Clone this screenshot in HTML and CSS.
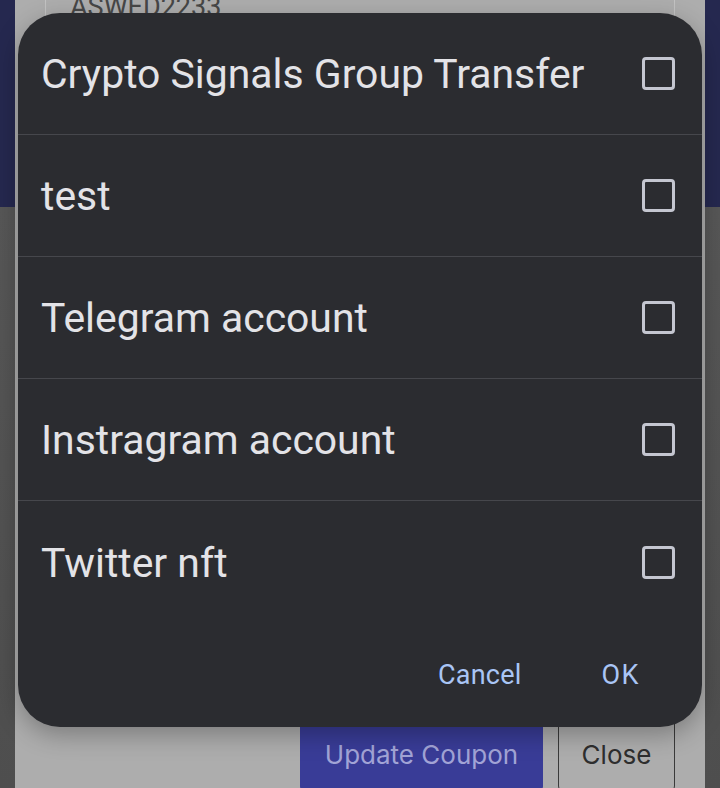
FILE: index.html
```html
<!DOCTYPE html>
<html>
<head>
<meta charset="utf-8">
<link rel="stylesheet" href="styles.css">
</head>
<body>
<div class="page">
  <div class="page-header"></div>
  <div class="page-rest"></div>
</div>

<div class="card">
  <div class="field"><span class="field-value">ASWED2233</span></div>
  <div class="card-spacer"></div>
  <div class="card-actions">
    <button class="btn btn-primary">Update Coupon</button>
    <button class="btn btn-outline">Close</button>
  </div>
</div>

<div class="dialog">
  <ul class="options">
    <li class="option"><span class="option-label">Crypto Signals Group Transfer</span><span class="checkbox"></span></li>
    <li class="option"><span class="option-label">test</span><span class="checkbox"></span></li>
    <li class="option"><span class="option-label">Telegram account</span><span class="checkbox"></span></li>
    <li class="option"><span class="option-label">Instragram account</span><span class="checkbox"></span></li>
    <li class="option last"><span class="option-label">Twitter nft</span><span class="checkbox"></span></li>
  </ul>
  <div class="dialog-actions">
    <span class="action cancel">Cancel</span>
    <span class="action ok">OK</span>
  </div>
</div>
</body>
</html>
```

FILE: styles.css
```css
html, body {
  margin: 0;
  padding: 0;
  width: 720px;
  height: 788px;
  overflow: hidden;
}
body {
  position: relative;
  font-family: Roboto, "Liberation Sans", sans-serif;
}
.page {
  display: flex;
  flex-direction: column;
  height: 788px;
}
.page-header {
  height: 207px;
  background: #25284f;
}
.page-rest {
  flex: 1;
  background: linear-gradient(#575757, #4e4e4e);
}
.card {
  position: absolute;
  left: 15px;
  right: 15px;
  top: 0;
  bottom: 0;
  background: #adadad;
  display: flex;
  flex-direction: column;
}
.field {
  margin: -40px 30px 0 30px;
  height: 80px;
  border: 1px solid #c2c2c2;
  border-radius: 6px;
  display: flex;
  align-items: flex-end;
  padding: 0 24px 20px;
  box-sizing: border-box;
}
.field-value {
  font-family: Roboto, sans-serif;
  font-size: 27px;
  color: #474747;
  line-height: 1;
  margin-bottom: -2px;
}
.card-spacer { flex: 1; }
.card-actions {
  display: flex;
  justify-content: flex-end;
  gap: 15px;
  padding-right: 30px;
  margin-bottom: -5px;
}
.btn {
  font-family: Inter, sans-serif;
  font-size: 26px;
  height: 78px;
  border-radius: 7px;
  padding: 0;
  box-sizing: border-box;
}
.btn-primary {
  width: 243px;
  background: #393c97;
  color: #a2a4d6;
  border: none;
}
.btn-outline {
  width: 117px;
  background: transparent;
  color: #2e2e2e;
  border: 1px solid #3a3a3a;
}
.dialog {
  position: absolute;
  left: 18px;
  top: 13px;
  width: 684px;
  height: 714px;
  background: #2b2c30;
  border-radius: 42px;
  box-shadow: 0 8px 24px rgba(0,0,0,0.28);
  display: flex;
  flex-direction: column;
}
.options {
  list-style: none;
  margin: 0;
  padding: 0;
}
.option {
  height: 122px;
  border-bottom: 1.5px solid #46474c;
  display: flex;
  align-items: center;
  justify-content: space-between;
  padding: 0 27px 0 23px;
  box-sizing: border-box;
}
.option.last {
  border-bottom: none;
}
.option-label {
  font-size: 40.9px;
  color: #e3e3e7;
  margin-top: 1px;
}
.checkbox {
  width: 33px;
  height: 33px;
  border: 3px solid #c4c6d0;
  border-radius: 4px;
  box-sizing: border-box;
}
.dialog-actions {
  margin-top: auto;
  display: flex;
  justify-content: flex-end;
  align-items: center;
  gap: 80px;
  padding: 0 62px 36px 0;
}
.action {
  font-family: Roboto, sans-serif;
  font-weight: 400;
  font-size: 27px;
  color: #a9c5f5;
  letter-spacing: 0.2px;
}
.action.ok {
  letter-spacing: 1.5px;
}
```
